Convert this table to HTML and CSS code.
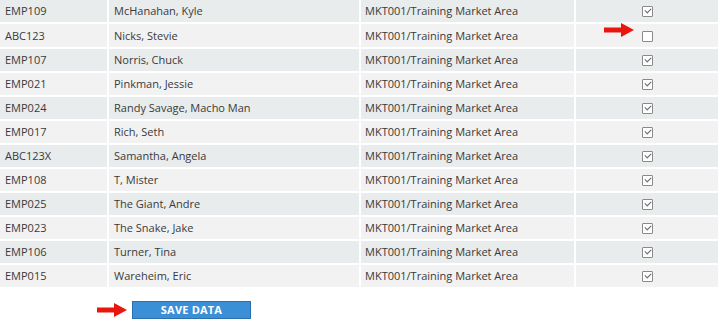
FILE: index.html
```html
<!DOCTYPE html>
<html>
<head>
<meta charset="utf-8">
<link rel="stylesheet" href="styles.css">
</head>
<body>
<table class="grid">
  <colgroup>
    <col class="c-id"><col class="c-name"><col class="c-area"><col class="c-chk">
  </colgroup>
  <tbody>
    <tr><td>EMP109</td><td>McHanahan, Kyle</td><td>MKT001/Training Market Area</td><td class="chk"><span class="box on"></span></td></tr>
    <tr><td>ABC123</td><td>Nicks, Stevie</td><td>MKT001/Training Market Area</td><td class="chk"><span class="wrap"><svg class="arrow arrow-row" width="32" height="16" viewBox="0 0 32 16"><path d="M1 5.5 H18 V1 L31 8 L18 15 V10.5 H1 Z" fill="#e8160c"/></svg><span class="box"></span></span></td></tr>
    <tr><td>EMP107</td><td>Norris, Chuck</td><td>MKT001/Training Market Area</td><td class="chk"><span class="box on"></span></td></tr>
    <tr><td>EMP021</td><td>Pinkman, Jessie</td><td>MKT001/Training Market Area</td><td class="chk"><span class="box on"></span></td></tr>
    <tr><td>EMP024</td><td>Randy Savage, Macho Man</td><td>MKT001/Training Market Area</td><td class="chk"><span class="box on"></span></td></tr>
    <tr><td>EMP017</td><td>Rich, Seth</td><td>MKT001/Training Market Area</td><td class="chk"><span class="box on"></span></td></tr>
    <tr><td>ABC123X</td><td>Samantha, Angela</td><td>MKT001/Training Market Area</td><td class="chk"><span class="box on"></span></td></tr>
    <tr><td>EMP108</td><td>T, Mister</td><td>MKT001/Training Market Area</td><td class="chk"><span class="box on"></span></td></tr>
    <tr><td>EMP025</td><td>The Giant, Andre</td><td>MKT001/Training Market Area</td><td class="chk"><span class="box on"></span></td></tr>
    <tr><td>EMP023</td><td>The Snake, Jake</td><td>MKT001/Training Market Area</td><td class="chk"><span class="box on"></span></td></tr>
    <tr><td>EMP106</td><td>Turner, Tina</td><td>MKT001/Training Market Area</td><td class="chk"><span class="box on"></span></td></tr>
    <tr><td>EMP015</td><td>Wareheim, Eric</td><td>MKT001/Training Market Area</td><td class="chk"><span class="box on"></span></td></tr>
  </tbody>
</table>
<div class="actions">
  <svg class="arrow" width="32" height="16" viewBox="0 0 32 16"><path d="M1 5.5 H18 V1 L31 8 L18 15 V10.5 H1 Z" fill="#e8160c"/></svg>
  <button class="save" type="button">SAVE DATA</button>
</div>
</body>
</html>
```

FILE: styles.css
```css
html, body {
  margin: 0;
  padding: 0;
  background: #fff;
}
body {
  font-family: "Open Sans", "Liberation Sans", sans-serif;
  font-size: 11px;
  color: #3a3a3a;
}
.grid {
  border-collapse: separate;
  border-spacing: 2px;
  margin: -2px 0 0 -2px;
  width: 722px;
  table-layout: fixed;
}
.c-id { width: 107px; }
.c-name { width: 250px; }
.c-area { width: 213px; }
.c-chk { width: auto; }
.grid td {
  height: 22px;
  padding: 0 0 0 4px;
  box-sizing: border-box;
  vertical-align: middle;
  white-space: nowrap;
  line-height: 22px;
}
.grid tr:nth-child(odd) td { background: #e8ecec; }
.grid tr:nth-child(even) td { background: #f2f2f2; }
.grid td:first-child { padding-left: 5px; }
.grid td:nth-child(2) { padding-left: 5px; }
.grid td.chk {
  text-align: center;
  padding: 0;
}
.wrap {
  position: relative;
  display: inline-block;
  vertical-align: middle;
}
.box {
  display: inline-block;
  vertical-align: middle;
  width: 9px;
  height: 9px;
  border: 1px solid #8a8a8a;
  background: #fff;
  border-radius: 1px;
  position: relative;
  margin-top: -2px;
}
.box.on::after {
  content: "";
  position: absolute;
  left: 2px;
  top: 1px;
  width: 5px;
  height: 3px;
  border-left: 1px solid #666;
  border-bottom: 1px solid #666;
  transform: rotate(-45deg);
}
.arrow-row {
  position: absolute;
  right: 18px;
  top: -3px;
}
.actions {
  display: flex;
  align-items: center;
  padding: 12px 0 0 96px;
  gap: 4px;
}
.save {
  width: 119px;
  height: 18px;
  padding: 0;
  margin: 0;
  border: 1px solid #2a6fae;
  background: #3a8fd6;
  color: #fff;
  font-family: "Open Sans", "Liberation Sans", sans-serif;
  font-weight: 700;
  font-size: 11px;
  letter-spacing: 0.2px;
  line-height: 16px;
}
```
